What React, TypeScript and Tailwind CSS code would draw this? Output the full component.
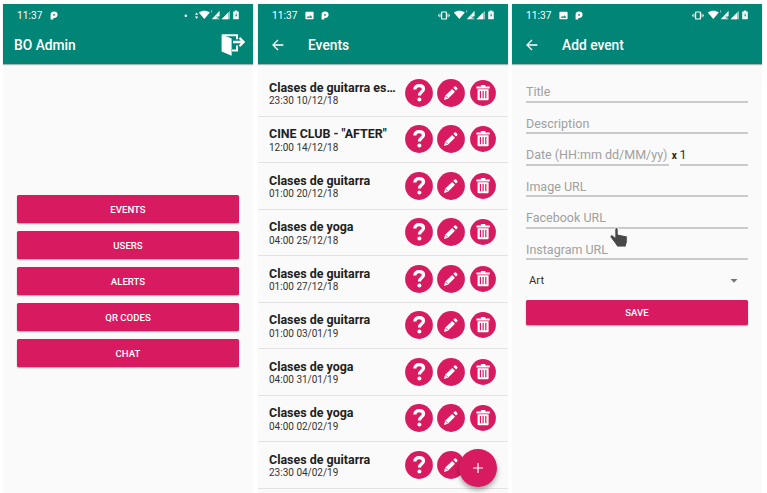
import React from "react";

type IconProps = { className?: string };

const Signals = () => (
  <svg className="h-[12px] w-[42px]" viewBox="0 0 42 12" fill="#fff">
    <path d="M-.2 3.6C3.2 1.2 7.4 1.2 10.8 3.6L5.3 10Z" />
    <path d="M12.2 1.2h.9v2.4h-.9z" opacity=".6" />
    <path d="M20.6 1.8v5.4l-1.6.8 1.6 2.2H12.7Z" opacity=".95" />
    <path d="M17.4 7l3 3.2M20.4 7l-3 3.2" stroke="#008577" strokeWidth=".6" />
    <path d="M31 1.8v8.4h-8.4Z" opacity=".55" />
    <path d="M29 3.8v6.4h-6.4Z" />
    <path d="M34.2 2.4h1.6v-.9h2.4v.9h1.6v7.8h-5.6Z" opacity=".95" />
    <path d="M37.4 4l-1.3 2.6h1l-.4 2 1.5-2.8h-1Z" fill="#008577" />
  </svg>
);

const Pandora = ({ className = "" }: IconProps) => (
  <svg className={`h-[9px] w-[8px] ${className}`} viewBox="0 0 8 9" fill="#fff" fillRule="evenodd">
    <path d="M.6 8.6V3.6C.6 1.6 1.9.5 4 .5c2.2 0 3.6 1.2 3.6 3.2S6.200 6.900 4.200 6.900H3.300V8.600ZM3.200 4.700h.9c.6 0 .9-.4.9-.9s-.3-.9-.9-.9-.9.4-.9.9Z" />
  </svg>
);

const Photo = () => (
  <svg className="h-[9px] w-[9px]" viewBox="0 0 9 9" fillRule="evenodd" fill="#fff">
    <path d="M1.2.8h6.6q.8 0 .8.8v5.8q0 .8-.8.8H1.2q-.8 0-.8-.8V1.6q0-.8.8-.8ZM1.5 6.8h6L5.6 4.2 4.1 6 3 4.9Z" />
  </svg>
);

const Vibrate = () => (
  <svg className="h-[9px] w-[12px]" viewBox="0 0 12 9" fill="none" stroke="#fff">
    <rect x="3.6" y="1" width="4.8" height="7" rx=".6" strokeWidth="1.2" />
    <path d="M2 2.6v3.8M10 2.6v3.8M.6 3.6v1.8M11.4 3.6v1.8" strokeWidth=".9" />
  </svg>
);

const Back = () => (
  <svg className="h-[12px] w-[12px]" viewBox="0 0 12 12" fill="none" stroke="#fff" strokeWidth="1.3">
    <path d="M11.4 6H1.2M6 1L1 6l5 5" />
  </svg>
);

const Exit = () => (
  <svg className="h-[23px] w-[24px]" viewBox="0 0 24 23" fill="#fff">
    <path d="M1.2 1.2H16v4M16 11.6v4.9h-5" fill="none" stroke="#fff" strokeWidth="1.9" />
    <path d="M.6.6 10.6 4.6v17.2L.6 17.4Z" />
    <path d="M12.5 8h9.5M18 3.6l4.4 4.4-4.4 4.4" fill="none" stroke="#008577" strokeWidth="3.8" />
    <path d="M12 8h10.6M18.4 3.8l4.2 4.2-4.2 4.2" fill="none" stroke="#fff" strokeWidth="2.3" />
  </svg>
);

const Question = () => (
  <svg className="h-[28px] w-[28px] shrink-0" viewBox="0 0 28 28">
    <circle cx="14" cy="14" r="13.9" fill="#D81B60" />
    <path d="M9.9 10.5C9.8 8 11.5 6.7 14.1 6.7c2.6 0 4.4 1.3 4.4 3.4 0 2.9-4 3-4 6v.5" fill="none" stroke="#fff" strokeWidth="3.3" />
    <circle cx="14.4" cy="20.5" r="2" fill="#fff" />
  </svg>
);

const Pencil = () => (
  <svg className="h-[28px] w-[28px] shrink-0" viewBox="0 0 28 28">
    <circle cx="14" cy="14" r="13.9" fill="#D81B60" />
    <path d="M7 20.9l1.1-4.1 7.1-6.9 2.8 2.8-7 7.1ZM16.3 8.8l1.4-1.3q.7-.5 1.3.1l1.3 1.3q.6.7 0 1.3L19 11.5Z" fill="#fff" />
    <path d="M8.5 16.9l2.4 2.4" stroke="#D81B60" strokeWidth=".8" />
  </svg>
);

const Trash = () => (
  <svg className="h-[26px] w-[26px] shrink-0" viewBox="0 0 26 26">
    <circle cx="13" cy="13" r="12.9" fill="#D81B60" />
    <path d="M6.4 6.4h4.5V5.1h4.4v1.3h4.5v2.1H6.4ZM7.6 9.3h11v10q0 1-1 1h-9q-1 0-1-1Z" fill="#fff" />
    <path d="M10.4 11v7.2M13.1 11v7.2M15.8 11v7.2" stroke="#D81B60" strokeWidth="1.2" />
  </svg>
);

const Hand = () => (
  <svg className="absolute left-[609px] top-[226px] h-[23px] w-[20px]" viewBox="0 0 20 23">
    <path d="M5.8 3Q6 1.6 7.5 1.6T9.2 3v5.2L17.4 9.8q.9.3.9 1.4v5l-1.4 4.9H8.2L6.6 18.6 1.4 11.6q-1-1.6.3-2.6 1.4-.8 2.6.6l1.5 1.6Z" fill="#484848" stroke="#fff" strokeWidth="1" />
  </svg>
);

function Phone({ title, home = false, children }: { title: string; home?: boolean; children: React.ReactNode }) {
  return (
    <section className="flex h-[489px] w-[250px] shrink-0 flex-col bg-[#fafafa]">
      <header className="h-[60px] shrink-0 bg-[#008577] text-white shadow-[0_1px_1px_rgba(0,60,55,0.35)]">
        <div className="flex h-[22px] items-center pl-[14px] pr-[12px]">
          <span className="w-[25px] pt-[2px] text-[10.2px] leading-none">11:37</span>
          <div className="ml-[7.5px] flex items-center gap-[7px]">
            {!home && <Photo />}
            <Pandora />
          </div>
          <div className="ml-auto flex items-center">
            {home ? (
              <svg className="h-[9px] w-[15px]" viewBox="0 0 15 9" fill="#fff">
                <circle cx="1.8" cy="4.8" r="1.3" />
                <path d="M11 3.8 12.6 1.4l1.6 2.4ZM11 5.6h3.2L12.6 8Z" />
              </svg>
            ) : (
              <span className="mr-[4px] flex"><Vibrate /></span>
            )}
            <Signals />
          </div>
        </div>
        <div className={`flex h-[38px] items-center pr-[8px] ${home ? "pl-[11px]" : "pl-[14px]"}`}>
          {!home && <span className="mr-[24px]"><Back /></span>}
          <h1 className="pt-[2px] text-[13.8px] font-medium leading-none">{title}</h1>
          {home && <span className="ml-auto"><Exit /></span>}
        </div>
      </header>
      {children}
    </section>
  );
}

function Button({ label, className = "h-[28px]" }: { label: string; className?: string }) {
  return (
    <button className={`w-full shrink-0 rounded-[1.5px] bg-[#D81B60] pt-px text-[9.6px] font-medium leading-none text-white shadow-[0_1px_1.5px_rgba(0,0,0,0.32)] ${className}`}>
      {label}
    </button>
  );
}

const events = [
  ["Clases de guitarra es…", "23:30 10/12/18"],
  ["CINE CLUB - \"AFTER\"", "12:00 14/12/18"],
  ["Clases de guitarra", "01:00 20/12/18"],
  ["Clases de yoga", "04:00 25/12/18"],
  ["Clases de guitarra", "01:00 27/12/18"],
  ["Clases de guitarra", "01:00 03/01/19"],
  ["Clases de yoga", "04:00 31/01/19"],
  ["Clases de yoga", "04:00 02/02/19"],
  ["Clases de guitarra", "23:30 04/02/19"],
];

function Field({ label }: { label: string }) {
  return <div className="h-[31.5px] border-b-2 border-[#cacaca] pt-[13px] text-[12.5px] leading-[16px] text-[#a0a0a0]">{label}</div>;
}

export default function App() {
  return (
    <main className="relative flex h-[493px] w-[767px] overflow-hidden bg-white pl-[3px] pt-[4px] font-['Roboto',sans-serif]">
      <Phone title="BO Admin" home>
        <div className="flex flex-col gap-[8px] px-[14px] pt-[131.3px]">
          {["EVENTS", "USERS", "ALERTS", "QR CODES", "CHAT"].map((t) => <Button key={t} label={t} />)}
        </div>
      </Phone>
      <div className="w-[5px] shrink-0" />
      <Phone title="Events">
        <div className="flex flex-col pt-[6px]">
          {events.map(([title, date], i) => (
            <div key={i} className="flex h-[46.5px] items-center border-b border-[#e2e2e2] pl-[11px] pr-[12px]">
              <div className="w-[136px] shrink-0 pt-[2px]">
                <div className="whitespace-nowrap text-[12.45px] font-bold leading-[13.5px] text-[#212121]">{title}</div>
                <div className="text-[10px] leading-[13px] text-[#333]">{date}</div>
              </div>
              <div className="flex items-center gap-[4px]">
                <Question />
                <Pencil />
                <span className="ml-px"><Trash /></span>
              </div>
            </div>
          ))}
        </div>
      </Phone>
      <div className="w-[4px] shrink-0" />
      <Phone title="Add event">
        <div className="flex flex-col px-[14px] pt-[7px]">
          <Field label="Title" />
          <Field label="Description" />
          <div className="flex">
            <div className="w-[143px]"><Field label="Date (HH:mm dd/MM/yy)" /></div>
            <span className="w-[10.5px] pt-[14px] text-center text-[10px] font-bold leading-[16px] text-[#222]">x</span>
            <div className="h-[31.5px] flex-1 border-b-2 border-[#cacaca] pt-[13px] text-[12.5px] leading-[16px] text-[#333]">1</div>
          </div>
          <Field label="Image URL" />
          <Field label="Facebook URL" />
          <Field label="Instagram URL" />
          <div className="flex h-[40px] items-center justify-between pl-[3px] pr-[10px] pt-[2px] text-[11.3px] text-[#333]">
            Art
            <svg className="h-[4px] w-[8px]" viewBox="0 0 8 4" fill="#757575"><path d="M.5 0h7L4 3.8Z" /></svg>
          </div>
          <Button label="SAVE" className="h-[25px]" />
        </div>
      </Phone>
      <button aria-label="Add" className="absolute left-[458.5px] top-[449px] flex h-[38px] w-[38px] items-center justify-center rounded-full bg-[#D81B60] shadow-[0_3px_5px_rgba(0,0,0,0.35)]">
        <svg className="h-[10px] w-[10px]" viewBox="0 0 10 10" stroke="#fff" strokeWidth="1.2"><path d="M0 5h10M5 0v10" /></svg>
      </button>
      <Hand />
    </main>
  );
}
